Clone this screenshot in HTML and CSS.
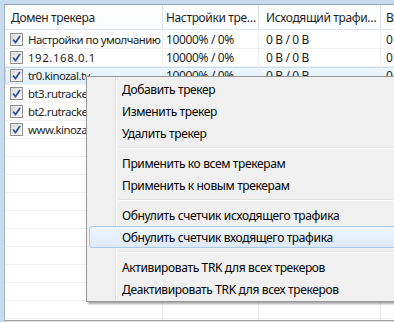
FILE: index.html
```html
<!DOCTYPE html>
<html lang="en">
<head>
  <meta charset="UTF-8">
  <title>Трекеры</title>
  <link rel="stylesheet" href="styles.css">
</head>
<body>
  <div class="frame">
    <div class="list">
      <div class="row header">
        <div class="cell">Домен трекера</div>
        <div class="cell">Настройки тре…</div>
        <div class="cell">Исходящий трафи…</div>
        <div class="cell">Вх</div>
      </div>

      <div class="row">
        <div class="cell name"><span class="check"><svg viewBox="0 0 9 9"><path d="M1 4.5 L3.5 7.5 L8 1" /></svg></span>Настройки по умолчанию</div>
        <div class="cell">10000% / 0%</div>
        <div class="cell">0 B / 0 B</div>
        <div class="cell">0</div>
      </div>
      <div class="row">
        <div class="cell name ip"><span class="check"><svg viewBox="0 0 9 9"><path d="M1 4.5 L3.5 7.5 L8 1" /></svg></span>192.168.0.1</div>
        <div class="cell">10000% / 0%</div>
        <div class="cell">0 B / 0 B</div>
        <div class="cell">0</div>
      </div>
      <div class="row hot">
        <div class="cell name"><span class="check"><svg viewBox="0 0 9 9"><path d="M1 4.5 L3.5 7.5 L8 1" /></svg></span>tr0.kinozal.tv</div>
        <div class="cell">10000% / 0%</div>
        <div class="cell">0 B / 0 B</div>
        <div class="cell">0</div>
      </div>
      <div class="row">
        <div class="cell name"><span class="check"><svg viewBox="0 0 9 9"><path d="M1 4.5 L3.5 7.5 L8 1" /></svg></span>bt3.rutracker.org</div>
        <div class="cell">10000% / 0%</div>
        <div class="cell">0 B / 0 B</div>
        <div class="cell">0</div>
      </div>
      <div class="row">
        <div class="cell name"><span class="check"><svg viewBox="0 0 9 9"><path d="M1 4.5 L3.5 7.5 L8 1" /></svg></span>bt2.rutracker.org</div>
        <div class="cell">10000% / 0%</div>
        <div class="cell">0 B / 0 B</div>
        <div class="cell">0</div>
      </div>
      <div class="row">
        <div class="cell name"><span class="check"><svg viewBox="0 0 9 9"><path d="M1 4.5 L3.5 7.5 L8 1" /></svg></span>www.kinozal.tv</div>
        <div class="cell">10000% / 0%</div>
        <div class="cell">0 B / 0 B</div>
        <div class="cell">0</div>
      </div>

      <div class="row"><div class="cell"></div><div class="cell"></div><div class="cell"></div><div class="cell"></div></div>
      <div class="row"><div class="cell"></div><div class="cell"></div><div class="cell"></div><div class="cell"></div></div>
      <div class="row"><div class="cell"></div><div class="cell"></div><div class="cell"></div><div class="cell"></div></div>
      <div class="row"><div class="cell"></div><div class="cell"></div><div class="cell"></div><div class="cell"></div></div>
      <div class="row"><div class="cell"></div><div class="cell"></div><div class="cell"></div><div class="cell"></div></div>
      <div class="row"><div class="cell"></div><div class="cell"></div><div class="cell"></div><div class="cell"></div></div>
      <div class="row"><div class="cell"></div><div class="cell"></div><div class="cell"></div><div class="cell"></div></div>
      <div class="row"><div class="cell"></div><div class="cell"></div><div class="cell"></div><div class="cell"></div></div>
      <div class="row"><div class="cell"></div><div class="cell"></div><div class="cell"></div><div class="cell"></div></div>
      <div class="row"><div class="cell"></div><div class="cell"></div><div class="cell"></div><div class="cell"></div></div>
      <div class="row"><div class="cell"></div><div class="cell"></div><div class="cell"></div><div class="cell"></div></div>

      <div class="hscroll"></div>

      <div class="menu">
        <div class="item">Добавить трекер</div>
        <div class="item">Изменить трекер</div>
        <div class="item">Удалить трекер</div>
        <div class="sep"></div>
        <div class="item">Применить ко всем трекерам</div>
        <div class="item">Применить к новым трекерам</div>
        <div class="sep"></div>
        <div class="item">Обнулить счетчик исходящего трафика</div>
        <div class="item active">Обнулить счетчик входящего трафика</div>
        <div class="sep"></div>
        <div class="item">Активировать TRK для всех трекеров</div>
        <div class="item">Деактивировать TRK для всех трекеров</div>
      </div>
    </div>
  </div>
</body>
</html>
```

FILE: styles.css
```css
body {
  margin: 0;
  background-color: #fff;
  font-family: "Noto Sans", Arial, sans-serif;
  font-size: 12px;
  letter-spacing: -0.36px;
  color: #1e1e1e;
  height: 322px;
  overflow: hidden;
}

.frame {
  height: 322px;
  box-sizing: border-box;
  padding: 4px 0 0 4px;
  background-color: #c6daf0;
}

.list {
  position: relative;
  height: 318px;
  overflow: hidden;
  background-color: #fff;
  border-top: 1px solid #9aa7b6;
  border-left: 1px solid #a9b4c2;
}

.row {
  display: grid;
  grid-template-columns: 158px 96px 122px 40px;
  height: 17px;
  border-bottom: 1px solid #efefef;
}

.cell {
  display: flex;
  align-items: center;
  padding-left: 2px;
  border-right: 1px solid #efefef;
  white-space: nowrap;
  overflow: hidden;
}

.cell:first-child {
  padding-left: 5px;
}

.name {
  font-size: 11.4px;
  letter-spacing: -0.5px;
}

.name.ip {
  letter-spacing: 0.6px;
}

.header {
  height: 24px;
  border-bottom: 1px solid #e2e6ea;
  background: linear-gradient(#ffffff, #fbfcfd);
}

.header .cell {
  padding-left: 6px;
  border-right: 1px solid #dfe3e8;
}

.header .cell:last-child {
  padding-left: 4px;
}

.row .cell:nth-child(2) {
  padding-left: 3px;
}

.row .cell:nth-child(3) {
  padding-left: 7px;
}

.row .cell:nth-child(4) {
  padding-left: 5px;
}

.header + .row {
  margin-top: 1px;
}

.hot {
  background: linear-gradient(#eff7fd, #e1effa);
  box-shadow: inset 0 1px 0 #c6def4, inset 1px 0 0 #c6def4;
}

.check {
  display: inline-flex;
  align-items: center;
  justify-content: center;
  width: 11px;
  height: 11px;
  margin-right: 5px;
  border: 1px solid #8e8f8f;
  background: linear-gradient(135deg, #dcdcdc, #fbfbfb);
  flex-shrink: 0;
}

.check svg {
  width: 9px;
  height: 9px;
  fill: none;
  stroke: #2b4e9a;
  stroke-width: 1.7;
}

.hscroll {
  position: absolute;
  left: 0;
  right: 0;
  bottom: 0;
  height: 2px;
  border-top: 1px solid #9c9c9c;
  background-color: #e8e8e8;
}

.menu {
  position: absolute;
  left: 81px;
  top: 71px;
  width: 308px;
  padding: 1px 2px;
  background-color: #f0f0f0;
  border: 1px solid #979797;
  box-shadow: 2px 2px 2px rgba(0, 0, 0, 0.35);
  background-image: linear-gradient(to right, transparent 28px, #e2e3e3 28px, #e2e3e3 29px, #fff 29px, #fff 30px, transparent 30px);
}

.item {
  height: 22px;
  line-height: 21px;
  padding-left: 32px;
  border: 1px solid transparent;
  border-radius: 3px;
  box-sizing: border-box;
  white-space: nowrap;
  color: #000;
}

.item.active {
  border-color: #a9c9e9;
  background: linear-gradient(#eef5fc, #dde9f7);
}

.sep {
  height: 8px;
  margin-left: 30px;
  background: linear-gradient(transparent 3px, #e0e0e0 3px, #e0e0e0 4px, #fff 4px, #fff 5px, transparent 5px);
}
```
